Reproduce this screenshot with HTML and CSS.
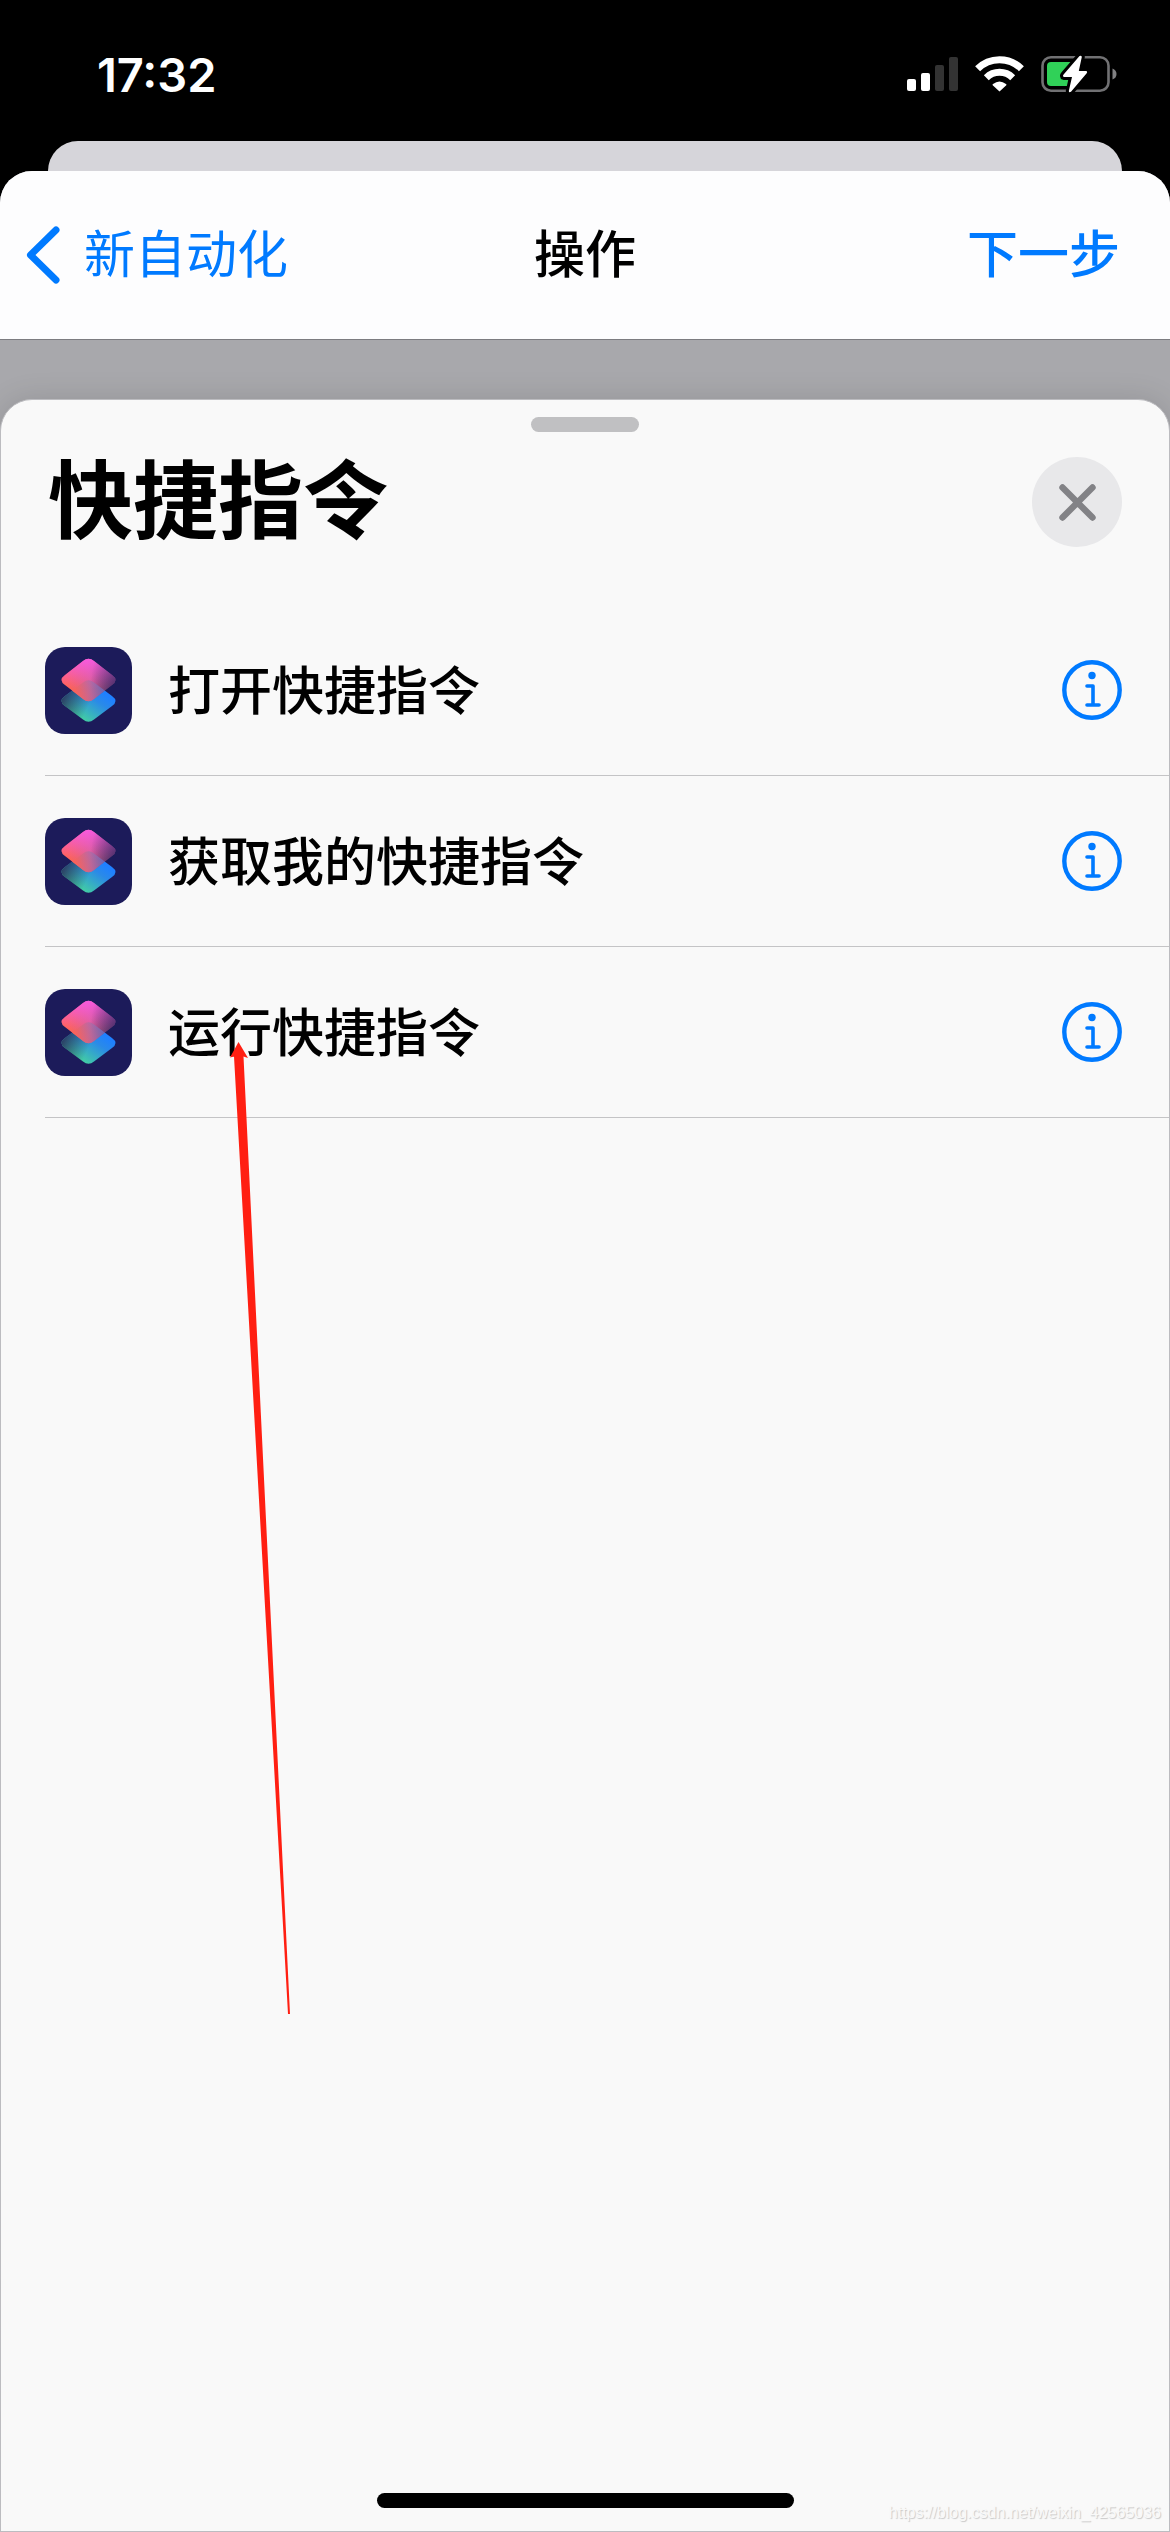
FILE: index.html
```html
<!DOCTYPE html>
<html lang="zh-CN">
<head>
<meta charset="utf-8">
<meta name="viewport" content="width=device-width, initial-scale=1">
<title>操作</title>
<link rel="stylesheet" href="styles.css">
</head>
<body>
<svg class="defs" aria-hidden="true">
  <defs>
    <linearGradient id="tile-top" gradientUnits="userSpaceOnUse" x1="22" y1="36" x2="68" y2="30">
      <stop offset="0" stop-color="#ff6450"/>
      <stop offset="0.5" stop-color="#d8608c"/>
      <stop offset="1" stop-color="#6c4078"/>
    </linearGradient>
    <linearGradient id="tile-pink" gradientUnits="userSpaceOnUse" x1="43" y1="12" x2="43" y2="42">
      <stop offset="0" stop-color="#f85ade"/>
      <stop offset="0.3" stop-color="#f85ade" stop-opacity="0.7"/>
      <stop offset="1" stop-color="#f85ade" stop-opacity="0"/>
    </linearGradient>
    <linearGradient id="tile-shade" gradientUnits="userSpaceOnUse" x1="46" y1="30" x2="70" y2="34">
      <stop offset="0" stop-color="#2a2058" stop-opacity="0"/>
      <stop offset="1" stop-color="#2a2058" stop-opacity="0.5"/>
    </linearGradient>
    <linearGradient id="tile-bottom" gradientUnits="userSpaceOnUse" x1="36" y1="72" x2="56" y2="44">
      <stop offset="0" stop-color="#43cfa2"/>
      <stop offset="0.7" stop-color="#2a8ae8"/>
      <stop offset="1" stop-color="#1f80ff"/>
    </linearGradient>
    <linearGradient id="tile-dark" gradientUnits="userSpaceOnUse" x1="18" y1="46" x2="44" y2="58">
      <stop offset="0" stop-color="#28305c" stop-opacity="0.95"/>
      <stop offset="1" stop-color="#28305c" stop-opacity="0"/>
    </linearGradient>
    <linearGradient id="tile-overlap" gradientUnits="userSpaceOnUse" x1="30" y1="48" x2="60" y2="40">
      <stop offset="0" stop-color="#ff6255"/>
      <stop offset="0.5" stop-color="#b86a9c"/>
      <stop offset="1" stop-color="#5f78d0"/>
    </linearGradient>
    <clipPath id="tile-clip">
      <path d="M38 35.500Q43.500 31 49 35.500L67 49Q74 54 67 59L49 72.500Q43.500 77 38 72.500L20 59Q13 54 20 49Z"/>
    </clipPath>
  </defs>
  <symbol id="shortcut" viewBox="0 0 87 87">
    <rect width="87" height="87" rx="20" fill="#1c1b5a"/>
    <path fill="url(#tile-bottom)" d="M38 35.500Q43.500 31 49 35.500L67 49Q74 54 67 59L49 72.500Q43.500 77 38 72.500L20 59Q13 54 20 49Z"/>
    <path fill="url(#tile-dark)" d="M38 35.500Q43.500 31 49 35.500L67 49Q74 54 67 59L49 72.500Q43.500 77 38 72.500L20 59Q13 54 20 49Z"/>
    <path fill="url(#tile-top)" d="M38 14Q43.500 9.500 49 14L67 28Q74 33 67 38L49 52Q43.500 56.500 38 52L20 38Q13 33 20 28Z"/>
    <path fill="url(#tile-pink)" d="M38 14Q43.500 9.500 49 14L67 28Q74 33 67 38L49 52Q43.500 56.500 38 52L20 38Q13 33 20 28Z"/>
    <path fill="url(#tile-shade)" d="M38 14Q43.500 9.500 49 14L67 28Q74 33 67 38L49 52Q43.500 56.500 38 52L20 38Q13 33 20 28Z"/>
    <path clip-path="url(#tile-clip)" fill="url(#tile-overlap)" fill-opacity="0.7" d="M38 14Q43.500 9.500 49 14L67 28Q74 33 67 38L49 52Q43.500 56.500 38 52L20 38Q13 33 20 28Z"/>
  </symbol>
  <symbol id="info" viewBox="0 0 60 60">
    <circle cx="30" cy="30" r="27.700" fill="none" stroke="#007aff" stroke-width="4.400"/>
    <circle cx="30" cy="15.500" r="3.700" fill="#007aff"/>
    <path d="M25 26H31V45M25 45H37" fill="none" stroke="#007aff" stroke-width="3.600" stroke-linecap="round" stroke-linejoin="round"/>
  </symbol>
</svg>

<header class="status">
  <time class="clock">17:32</time>
  <div class="indicators">
    <svg width="51" height="36" viewBox="0 0 51 36" aria-hidden="true">
      <rect x="0" y="23" width="9" height="12" rx="2" fill="#fff"/>
      <rect x="14" y="17" width="9" height="18" rx="2" fill="#fff"/>
      <rect x="28" y="9" width="9" height="26" rx="2" fill="#333"/>
      <rect x="42" y="1" width="9" height="34" rx="2" fill="#333"/>
    </svg>
    <svg width="49" height="36" viewBox="0 0 49 36" aria-hidden="true">
      <g fill="none" stroke="#fff" stroke-width="7">
        <path d="M2.600 12.700A31 31 0 0 1 46.400 12.700"/>
        <path d="M11.300 21.700A19 19 0 0 1 37.700 21.700"/>
      </g>
      <path d="M24.500 35.500L17.700 29.200Q17.200 28.500 18 28Q24.500 23 31 28Q31.800 28.500 31.300 29.200Z" fill="#fff"/>
    </svg>
    <svg width="76" height="38" viewBox="0 0 76 38" aria-hidden="true">
      <rect x="1.500" y="2.200" width="66" height="33.500" rx="8.500" fill="none" stroke="#717173" stroke-width="2.600"/>
      <path d="M71.500 13.500Q75.500 15 75.500 19T71.500 24.500Z" fill="#818183"/>
      <path d="M10 7H34V31H10Q6 31 6 27V11Q6 7 10 7Z" fill="#30d158"/>
      <path d="M38.500 1Q40.500 0 40.800 2L37.800 16H45Q47 16.500 45.500 18.500L30 36.800Q28 38 27.800 36L31 22H23Q21 21.300 22.800 19.200Z" fill="#fff" stroke="#000" stroke-width="6" paint-order="stroke"/>
    </svg>
  </div>
</header>

<div class="back-card"></div>

<main class="card">
  <nav class="nav">
    <a class="back" href="#">
      <svg width="36" height="58" viewBox="0 0 36 58" aria-hidden="true"><path d="M30 4L4.500 29L30 54" fill="none" stroke="#007aff" stroke-width="7" stroke-linecap="round" stroke-linejoin="round"/></svg>
      <span>新自动化</span>
    </a>
    <h1 class="nav-title">操作</h1>
    <a class="next" href="#">下一步</a>
  </nav>

  <section class="sheet">
    <div class="grabber"></div>
    <div class="sheet-head">
      <h2 class="title">快捷指令</h2>
      <button class="close" type="button" aria-label="关闭">
        <svg width="37" height="37" viewBox="0 0 37 37" aria-hidden="true"><path d="M3.500 3.500L33.500 33.500M33.500 3.500L3.500 33.500" stroke="#828286" stroke-width="6.400" stroke-linecap="round"/></svg>
      </button>
    </div>
    <ul class="actions">
      <li class="action">
        <svg class="app" aria-hidden="true"><use href="#shortcut"/></svg>
        <span class="label">打开快捷指令</span>
        <button class="info" type="button" aria-label="信息"><svg aria-hidden="true"><use href="#info"/></svg></button>
      </li>
      <li class="action">
        <svg class="app" aria-hidden="true"><use href="#shortcut"/></svg>
        <span class="label">获取我的快捷指令</span>
        <button class="info" type="button" aria-label="信息"><svg aria-hidden="true"><use href="#info"/></svg></button>
      </li>
      <li class="action">
        <svg class="app" aria-hidden="true"><use href="#shortcut"/></svg>
        <span class="label">运行快捷指令</span>
        <button class="info" type="button" aria-label="信息"><svg aria-hidden="true"><use href="#info"/></svg></button>
        <svg class="pointer" viewBox="0 0 60 972" aria-hidden="true"><path d="M8.500 0L18 16L13.500 14.500L60 972H58L4 14.500L0 15.500Z" fill="#ff1f12"/></svg>
      </li>
    </ul>
    <div class="home"></div>
    <div class="watermark">https://blog.csdn.net/weixin_42565036</div>
  </section>
</main>
</body>
</html>
```
FILE: styles.css
```css
* {
  box-sizing: border-box;
}

body {
  margin: 0;
  min-height: 100vh;
  display: flex;
  flex-direction: column;
  background: #000;
  color: #000;
  font-family: Inter, "Noto Sans CJK SC", sans-serif;
}

h1, h2, ul {
  margin: 0;
  padding: 0;
}

button {
  padding: 0;
  border: 0;
  background: none;
}

a {
  color: #007aff;
  text-decoration: none;
}

.defs {
  position: absolute;
  width: 0;
  height: 0;
}

.status {
  height: 141px;
  padding: 0 53px 0 97px;
  display: flex;
  align-items: center;
  justify-content: space-between;
}

.clock {
  margin-top: 8px;
  color: #fff;
  font-size: 47px;
  font-weight: 600;
  line-height: 56px;
}

.indicators {
  display: flex;
  align-items: center;
  gap: 17px;
  margin-top: 6px;
}

.back-card {
  height: 60px;
  margin: 0 48px -30px;
  border-radius: 30px 30px 0 0;
  background: #d6d5da;
}

.card {
  flex: 1;
  display: flex;
  flex-direction: column;
  border-radius: 32px 32px 0 0;
  background: #a8a8ac;
  overflow: hidden;
}

.nav {
  height: 169px;
  padding: 0 26px;
  display: grid;
  grid-template-columns: 1fr auto 1fr;
  align-items: center;
  border-bottom: 1px solid #7c7c80;
  background: #fdfdfe;
  font-size: 51px;
  line-height: 76px;
}

.back {
  display: flex;
  align-items: center;
  gap: 22px;
}

.nav-title {
  font-size: 51px;
  font-weight: 500;
}

.next {
  justify-self: end;
  padding-right: 24px;
  font-weight: 500;
}

.sheet {
  flex: 1;
  display: flex;
  flex-direction: column;
  margin-top: 59px;
  padding-top: 17px;
  border: 1px solid #bcbcc0;
  border-radius: 32px 32px 0 0;
  background: #f9f9f9;
  box-shadow: 0 0 30px rgba(0, 0, 0, 0.12);
  position: relative;
}

.grabber {
  width: 108px;
  height: 15px;
  margin: 0 auto;
  border-radius: 8px;
  background: #c0c0c2;
}

.sheet-head {
  display: flex;
  align-items: center;
  justify-content: space-between;
  padding: 25px 47px 58px 47px;
}

.title {
  font-size: 85px;
  font-weight: 700;
  line-height: 90px;
}

.close {
  width: 90px;
  height: 90px;
  display: grid;
  place-items: center;
  border-radius: 50%;
  background: #e8e8ea;
}

.actions {
  margin-left: 44px;
  list-style: none;
}

.action {
  position: relative;
  height: 171px;
  display: flex;
  align-items: center;
  padding-right: 47px;
  border-bottom: 1px solid #c4c4c6;
}

.app {
  width: 87px;
  height: 87px;
}

.label {
  flex: 1;
  margin-left: 36px;
  padding-top: 4px;
  font-size: 52px;
  font-weight: 500;
  line-height: 76px;
}

.info,
.info svg {
  display: block;
  width: 60px;
  height: 60px;
}

.pointer {
  position: absolute;
  left: 185px;
  top: 95px;
  width: 60px;
  height: 972px;
}

.home {
  width: 417px;
  height: 15px;
  margin: auto auto 23px;
  border-radius: 8px;
  background: #000;
}

.watermark {
  position: absolute;
  right: 8px;
  bottom: 8px;
  color: #f9f9f9;
  font: 16px/20px "Liberation Sans", sans-serif;
  text-shadow: 1px 1px 1px #c8c8c8;
}
```
